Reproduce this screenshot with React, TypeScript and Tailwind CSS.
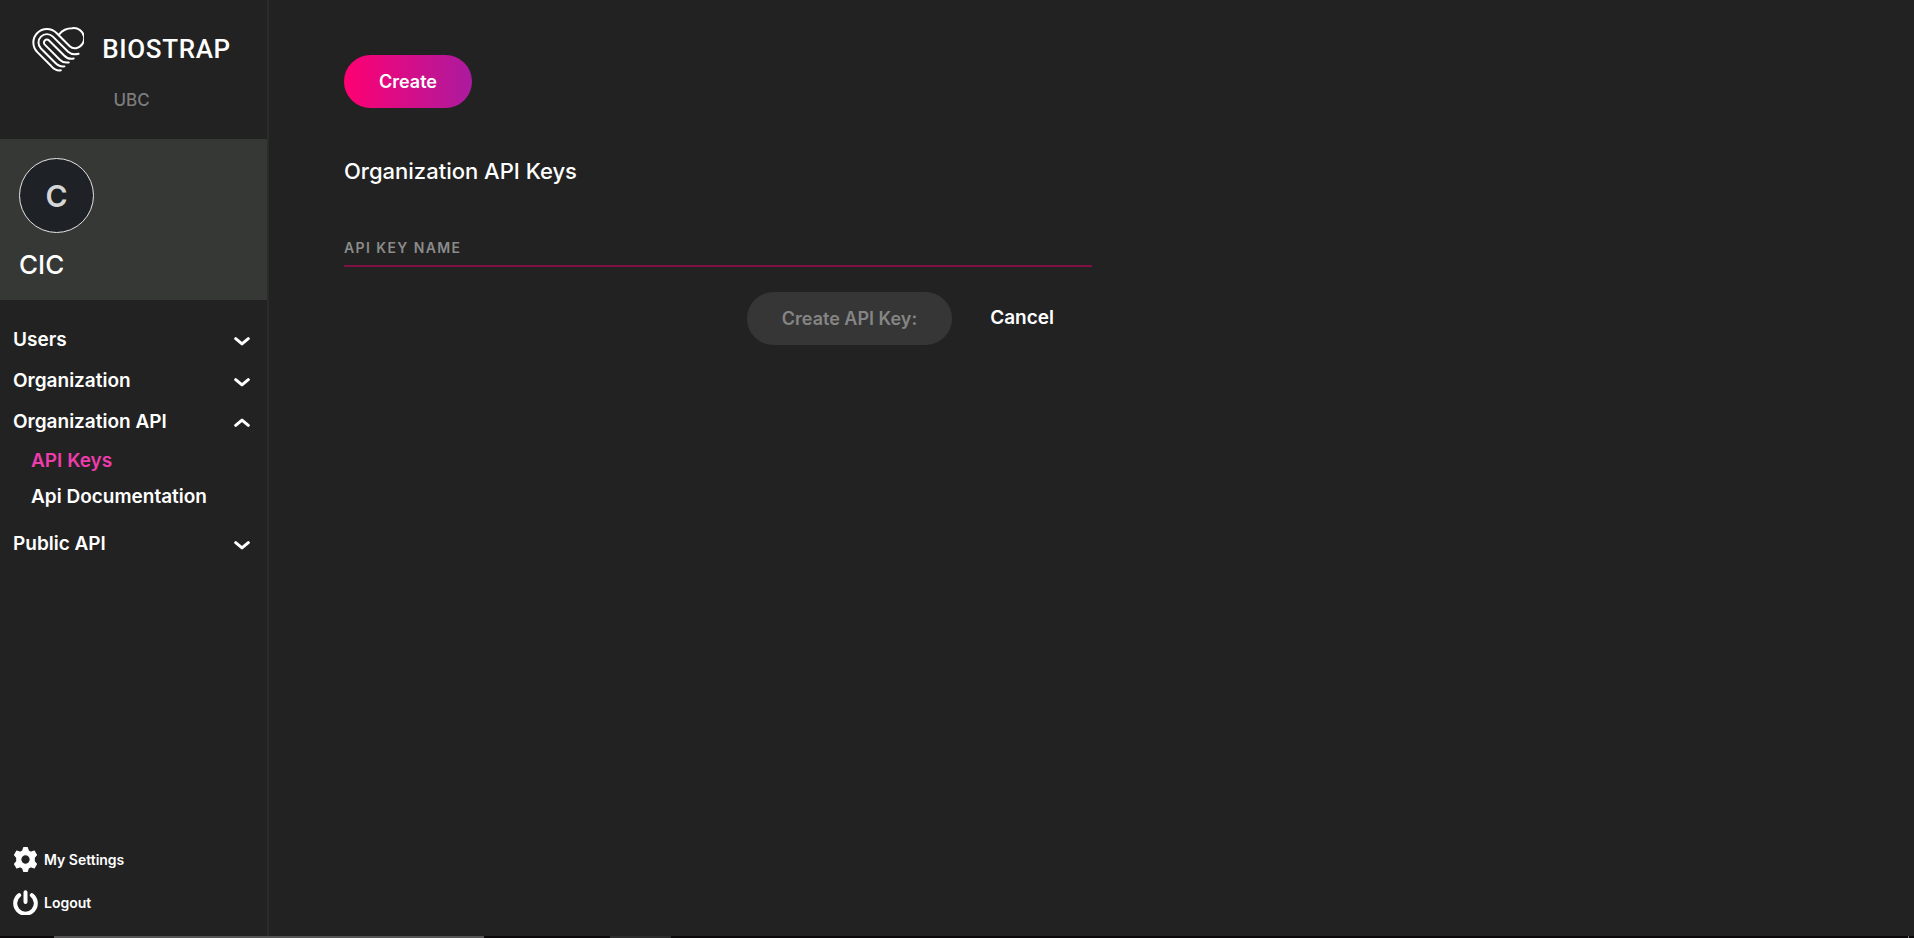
import { useState } from "react";

function Logo() {
  return (
    <svg
      viewBox="35 32 155 136"
      className="h-[45px] w-[52px] shrink-0"
      fill="none"
      stroke="#fff"
      strokeWidth="6"
      strokeLinecap="round"
      strokeLinejoin="round"
      aria-hidden="true"
    >
      <path d="M116 54C126 42 137 36 155 36A30.500 30.500 0 0 1 167 96Q156 98 148 90L108 50A41 41 0 1 0 50 108L92 150Q106 166 121 163" />
      <path d="M175 113Q155 118 143 107L97 61A25 25 0 1 0 61 97L104 140Q116 153 132 151" />
      <path d="M160 127Q143 131 131 118L85.400 72.600A9 9 0 1 0 72.600 85.400L118 131Q129 142 145 139" />
    </svg>
  );
}

function Chevron({ open }: { open: boolean }) {
  return (
    <svg
      viewBox="0 0 16 10"
      className="h-[10px] w-4 shrink-0"
      fill="none"
      stroke="#fff"
      strokeWidth="3"
      strokeLinecap="round"
      strokeLinejoin="round"
      aria-hidden="true"
    >
      <path d={open ? "M1.7 7.4L8 2.1L14.3 7.4" : "M1.7 2.6L8 7.9L14.3 2.6"} />
    </svg>
  );
}

const groups = [
  { name: "Users", links: [] },
  { name: "Organization", links: [] },
  { name: "Organization API", links: ["API Keys", "Api Documentation"] },
  { name: "Public API", links: [] },
];

function Sidebar() {
  const [open, setOpen] = useState("Organization API");
  return (
    <aside className="flex w-[269px] shrink-0 flex-col border-r-2 border-[#2b2b2b]">
      <div className="flex flex-col items-center pt-[27px] pr-1 pb-[27px]">
        <div className="flex items-center gap-[18px]">
          <Logo />
          <span className="font-['Roboto',sans-serif] text-[26px] leading-[45px] font-medium tracking-wide">
            BIOSTRAP
          </span>
        </div>
        <div className="mt-4 text-[17px] leading-6 font-medium text-[#7d7d7d]">UBC</div>
      </div>
      <div className="flex flex-col items-start gap-4 bg-[#363836] px-[19px] pt-[19px] pb-[19px]">
        <div className="flex size-[75px] items-center justify-center rounded-full border border-[#e5e5e5] bg-[#1e2126] text-3xl font-semibold text-[#d6d6d6]">
          C
        </div>
        <div className="text-[26px] leading-8 font-medium">CIC</div>
      </div>
      <nav className="flex flex-col px-[13px] pt-5 text-[19px] font-semibold">
        {groups.map((group) => (
          <div key={group.name}>
            <button
              type="button"
              className="flex h-[41px] w-full items-center justify-between pr-1"
              aria-expanded={open === group.name}
              onClick={() => setOpen(open === group.name ? "" : group.name)}
            >
              {group.name}
              <Chevron open={open === group.name} />
            </button>
            {open === group.name && group.links.length > 0 && (
              <ul className="pb-[9px] pl-[18px]">
                {group.links.map((link) => (
                  <li key={link} className="leading-9">
                    <a href="#" className={link === "API Keys" ? "text-[#ed3cab]" : "text-white"}>
                      {link}
                    </a>
                  </li>
                ))}
              </ul>
            )}
          </div>
        ))}
      </nav>
      <div className="mt-auto flex flex-col gap-[18px] px-[13px] pb-[21px] text-[14px] leading-6 font-semibold">
        <a href="#" className="flex items-center gap-[6px]">
          <svg viewBox="0 0 24 24" className="size-[25px]" aria-hidden="true">
            <path
              fill="#fff"
              stroke="#fff"
              strokeWidth="1"
              strokeLinejoin="round"
              fillRule="evenodd"
              d="M10.200 .6h3.600l1 3.200 2.400 1.300 3.200-1.300 2.200 3.800-2.200 2.700v3.400l2.200 2.700-2.200 3.800-3.200-1.300-2.400 1.300-1 3.200h-3.600l-1-3.200-2.400-1.300-3.200 1.300-2.200-3.800 2.200-2.700v-3.400L1.400 7.600l2.200-3.800 3.200 1.300 2.400-1.300zM12 7.500a4.500 4.500 0 1 0 0 9 4.500 4.500 0 0 0 0-9z"
            />
          </svg>
          My Settings
        </a>
        <a href="#" className="flex items-center gap-[6px]">
          <svg
            viewBox="0 0 25 25"
            className="size-[25px]"
            fill="none"
            stroke="#fff"
            strokeWidth="4"
            strokeLinecap="round"
            aria-hidden="true"
          >
            <path d="M6.200 5.200a10.300 10.300 0 1 0 12.600 0M12.500 2.200v9.800" />
          </svg>
          Logout
        </a>
      </div>
    </aside>
  );
}

export default function App() {
  const [name, setName] = useState("");
  return (
    <div className="flex min-h-screen flex-col bg-[#222] font-['Inter',sans-serif] text-white">
      <div className="flex grow">
        <Sidebar />
        <main className="flex grow flex-col items-start px-[75px] pt-[55px]">
          <button
            type="button"
            className="h-[53px] rounded-full bg-linear-to-r/srgb from-[#ff0072] to-[#ab1b9f] px-[35px] text-[18px] font-semibold"
          >
            Create
          </button>
          <h1 className="mt-[47px] text-[22px] leading-8 font-medium">Organization API Keys</h1>
          <form className="mt-11 w-full max-w-[748px]" onSubmit={(e) => e.preventDefault()}>
            <div className="grid h-[36px] border-b-2 border-[#7d1143]">
              {name === "" && (
                <label
                  htmlFor="key-name"
                  className="col-start-1 row-start-1 text-[14px] leading-[34px] font-semibold tracking-widest text-[#8b8b8b]"
                >
                  API KEY NAME
                </label>
              )}
              <input
                id="key-name"
                value={name}
                onChange={(e) => setName(e.target.value)}
                className="col-start-1 row-start-1 w-full bg-transparent text-[14px] font-semibold outline-none"
              />
            </div>
            <div className="mt-[25px] flex justify-end font-semibold">
              <button
                type="submit"
                disabled={!name}
                className="h-[53px] rounded-full bg-[#363636] px-[35px] text-[18px] text-[#858585]"
              >
                Create API Key:
              </button>
              <button type="button" className="h-[53px] px-[38px] text-[19px]">
                Cancel
              </button>
            </div>
          </form>
        </main>
      </div>
      <div className="flex h-[2px] bg-[#0c090b]">
        <div className="ml-[54px] w-[430px] bg-[#555]" />
        <div className="ml-[126px] w-[61px] bg-[#2d2d2d]" />
        <div className="mr-[5px] ml-auto w-px bg-[#777]" />
      </div>
    </div>
  );
}
